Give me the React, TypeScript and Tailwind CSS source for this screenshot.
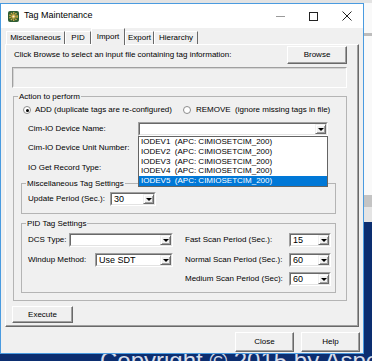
import React from "react";

function Arrow() {
  return (
    <div className="flex w-[11px] items-center justify-center border border-t-[#f0f0f0] border-l-[#f0f0f0] border-r-[#696969] border-b-[#696969] bg-[#f0f0f0] shadow-[inset_1px_1px_0_white,inset_-1px_-1px_0_#a0a0a0]">
      <div className="h-0 w-0 border-x-[3px] border-t-[3px] border-x-transparent border-t-black" />
    </div>
  );
}

function Combo({
  className = "",
  value = "",
  children,
}: {
  className?: string;
  value?: string;
  children?: React.ReactNode;
}) {
  return (
    <div
      className={`relative flex h-[14px] border border-t-[#a0a0a0] border-l-[#a0a0a0] border-r-white border-b-white ${className}`}
    >
      <div className="flex flex-1 border border-t-[#696969] border-l-[#696969] border-r-[#e3e3e3] border-b-[#e3e3e3] bg-white">
        <span className="flex-1 pl-[2px] text-[9px] leading-[10px]">{value}</span>
        <Arrow />
      </div>
      {children}
    </div>
  );
}

function Btn({ className = "", children }: { className?: string; children: React.ReactNode }) {
  return (
    <div
      className={`flex items-center justify-center border border-t-white border-l-white border-r-[#696969] border-b-[#696969] bg-[#f0f0f0] shadow-[inset_-1px_-1px_0_#a0a0a0] ${className}`}
    >
      {children}
    </div>
  );
}

function Group({
  title,
  className = "",
  children,
}: {
  title: string;
  className?: string;
  children: React.ReactNode;
}) {
  return (
    <fieldset className={`border border-[#b4b4b4] ${className}`}>
      <legend className="ml-[4px] px-[1px] leading-[11px]">{title}</legend>
      {children}
    </fieldset>
  );
}

function Radio({ checked }: { checked?: boolean }) {
  return (
    <div className="flex h-[8px] w-[8px] items-center justify-center rounded-full border border-[#8c8c8c] bg-white">
      {checked && <div className="h-[3px] w-[3px] rounded-full bg-black" />}
    </div>
  );
}

function Tab({ label, w }: { label: string; w: string }) {
  return (
    <div
      className={`flex h-[13px] items-center justify-center border-l border-t border-r border-l-white border-t-white border-r-[#696969] ${w}`}
    >
      {label}
    </div>
  );
}

function AppIcon() {
  return (
    <svg width="11" height="11" viewBox="0 0 11 11">
      <rect x="0" y="0" width="11" height="11" rx="2" fill="#2f5d33" />
      <circle cx="5.5" cy="5.5" r="3.6" fill="none" stroke="#d2b048" strokeWidth="1.6" strokeDasharray="1.4 0.9" />
      <circle cx="5.5" cy="5.5" r="2.4" fill="#c9a33c" />
      <circle cx="5.5" cy="5.5" r="1.1" fill="#f4f0dc" />
    </svg>
  );
}

const devices = ["IODEV1", "IODEV2", "IODEV3", "IODEV4", "IODEV5"];

export default function App() {
  return (
    <div className="relative h-[361px] w-[372px] overflow-hidden bg-[#0c2e70] font-['Liberation_Sans',Arial,sans-serif] text-black">
      {/* window behind the dialog */}
      <div className="absolute left-0 top-0 flex h-[222px] w-full flex-col bg-[#f9f9f9]">
        <div className="h-[3px] bg-[#e3e3e3]" />
        <div className="mt-[30px] h-[3px] bg-[#bcbcbc]" />
        <div className="mt-auto h-[12px] bg-[#c4c4c4]" />
        <div className="h-[15px] bg-[#e4e4e4]" />
      </div>
      <div className="absolute left-[100px] top-[349px] whitespace-nowrap text-[24px] leading-[24px] text-[#d5dcea]">
        Copyright © 2015 by AspenTech
      </div>

      {/* dialog */}
      <div className="absolute left-0 top-[3px] flex h-[351px] w-[364px] flex-col border border-[#4a9be0] bg-[#f0f0f0]">
        <div className="flex h-[24px] items-center bg-white">
          <div className="ml-[7px]">
            <AppIcon />
          </div>
          <span className="ml-[5px] text-[9px]">Tag Maintenance</span>
          <div className="ml-auto flex h-full items-center">
            <div className="flex w-[33px] justify-center">
              <div className="h-px w-[9px] bg-[#9a9a9a]" />
            </div>
            <div className="flex w-[33px] justify-center">
              <div className="h-[9px] w-[9px] border border-[#222]" />
            </div>
            <div className="flex w-[33px] justify-center">
              <svg width="10" height="10" viewBox="0 0 10 10">
                <path d="M0.5 0.5 L9.5 9.5 M9.5 0.5 L0.5 9.5" stroke="#222" strokeWidth="1" />
              </svg>
            </div>
          </div>
        </div>

        <div className="flex flex-1 flex-col whitespace-nowrap text-[8px]">
          {/* tabs */}
          <div className="flex h-[16px] items-end pl-[5px]">
            <Tab label="Miscellaneous" w="w-[59px]" />
            <Tab label="PID" w="w-[26px]" />
            <div className="relative z-10 -mb-px flex h-[17px] w-[34px] justify-center border-l border-t border-r border-l-white border-t-white border-r-[#696969] bg-[#f0f0f0] pt-[2px]">
              Import
            </div>
            <Tab label="Export" w="w-[29px]" />
            <Tab label="Hierarchy" w="w-[44px]" />
          </div>

          {/* tab page */}
          <div className="ml-[4px] flex h-[283px] w-[354px] flex-col border border-t-white border-l-white border-r-[#696969] border-b-[#696969] shadow-[inset_-1px_-1px_0_#a0a0a0]">
            <div className="mt-[1px] flex h-[18px] items-center justify-between pl-[8px] pr-[11px]">
              <span>Click Browse to select an input file containing tag information:</span>
              <Btn className="h-[18px] w-[60px]">Browse</Btn>
            </div>
            <div className="ml-[6px] mt-[3px] h-[21px] w-[335px] border border-t-[#a0a0a0] border-l-[#a0a0a0] border-r-white border-b-white">
              <div className="h-full w-full border border-t-[#d4d4d4] border-l-[#d4d4d4] border-r-[#f0f0f0] border-b-[#f0f0f0]" />
            </div>

            <Group title="Action to perform" className="ml-[7px] mt-[3px] h-[210px] w-[334px]">
              <div className="mt-[2px] flex h-[12px] items-center">
                <div className="ml-[9px] flex w-[160px] items-center gap-[4px]">
                  <Radio checked />
                  <span>ADD (duplicate tags are re-configured)</span>
                </div>
                <div className="flex items-center gap-[5px]">
                  <Radio />
                  <span className="whitespace-pre">REMOVE  (ignore missing tags in file)</span>
                </div>
              </div>

              <div className="ml-[14px] mt-[6px] flex h-[14px] items-center">
                <span className="w-[110px]">Cim-IO Device Name:</span>
                <Combo className="z-20 w-[190px]">
                  <div className="absolute left-[-1px] top-[13px] w-[190px] border border-[#646464] bg-white">
                    {devices.map((d, i) => (
                      <div
                        key={d}
                        className={`h-[9.8px] whitespace-pre pl-[2px] leading-[9.8px] ${
                          i === 4 ? "bg-[#0078d7] text-white" : ""
                        }`}
                      >
                        {d}  (APC: CIMIOSETCIM_200)
                      </div>
                    ))}
                  </div>
                </Combo>
              </div>
              <div className="ml-[14px] mt-[5px] flex h-[14px] items-center">
                <span>Cim-IO Device Unit Number:</span>
              </div>
              <div className="ml-[14px] mt-[6px] flex h-[14px] items-center">
                <span>IO Get Record Type:</span>
              </div>

              <Group title="Miscellaneous Tag Settings" className="ml-[7px] mt-[3px] h-[36px] w-[315px]">
                <div className="ml-[6px] mt-[3px] flex h-[14px] items-center">
                  <span className="w-[82px]">Update Period (Sec.):</span>
                  <Combo className="w-[46px]" value="30" />
                </div>
              </Group>

              <Group title="PID Tag Settings" className="ml-[7px] mt-[4px] h-[75px] w-[315px]">
                <div className="ml-[6px] mt-[4px] flex h-[14px] items-center">
                  <div className="flex w-[157px] items-center">
                    <span className="w-[41px]">DCS Type:</span>
                    <Combo className="w-[104px]" />
                  </div>
                  <span className="w-[104px]">Fast Scan Period (Sec.):</span>
                  <Combo className="w-[42px]" value="15" />
                </div>
                <div className="ml-[6px] mt-[6px] flex h-[14px] items-center">
                  <div className="flex w-[157px] items-center">
                    <span className="w-[67px]">Windup Method:</span>
                    <Combo className="w-[78px]" value="Use SDT" />
                  </div>
                  <span className="w-[104px]">Normal Scan Period (Sec.):</span>
                  <Combo className="w-[42px]" value="60" />
                </div>
                <div className="ml-[6px] mt-[5px] flex h-[14px] items-center">
                  <div className="w-[157px]" />
                  <span className="w-[104px]">Medium Scan Period (Sec):</span>
                  <Combo className="w-[42px]" value="60" />
                </div>
              </Group>
            </Group>

            <Btn className="ml-[6px] mt-[5px] h-[17px] w-[61px]">Execute</Btn>
          </div>

          <div className="mt-[5px] flex justify-end gap-[7px] pr-[3px]">
            <Btn className="h-[20px] w-[59px]">Close</Btn>
            <Btn className="h-[20px] w-[59px]">Help</Btn>
          </div>
        </div>
      </div>
    </div>
  );
}
